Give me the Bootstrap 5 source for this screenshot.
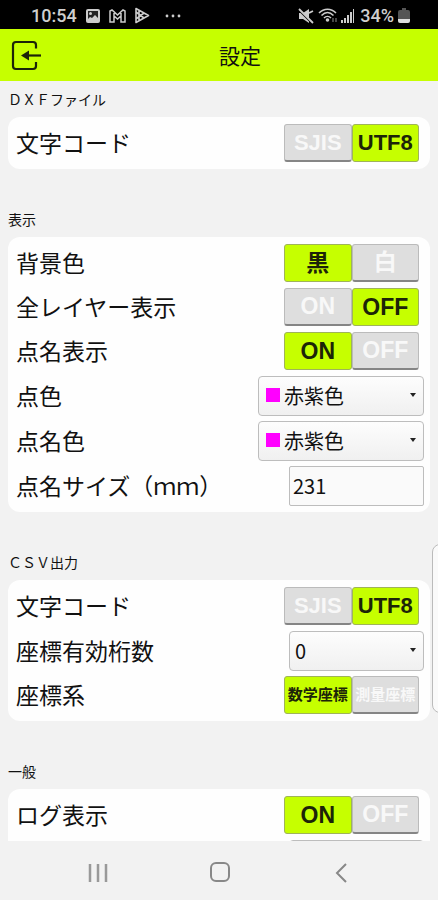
<!DOCTYPE html>
<html lang="ja">
<head>
<meta charset="utf-8">
<meta name="viewport" content="width=device-width, initial-scale=1">
<title>設定</title>
<link href="https://cdn.jsdelivr.net/npm/bootstrap@5.3.0/dist/css/bootstrap.min.css" rel="stylesheet">
<style>
:root { --lime: #c6ff00; }
body { background: #f2f2f2; color: #111; font-family: "Noto Sans CJK JP", sans-serif; }
.status-bar { height: 29px; background: #000; color: #cfcfcf; font: 500 18px/29px Roboto, sans-serif; padding: 2px 28px 0 31px; }
.app-bar { height: 52px; background: var(--lime); padding-left: 10px; }
.app-bar h1 { font-size: 21px; line-height: 52px; font-weight: 400; }
.back-btn { width: 32px; height: 34px; }
.settings { padding: 0 8px; min-height: 0; }
.settings h2 { font-size: 14px; line-height: 36px; height: 36px; font-weight: 400; color: #111; }
.panel { background: #fefefe; border-radius: 12px; padding: 4px 6px 4px 8px; margin-bottom: 32px; }
.setting { height: 44px; }
.setting-field { height: 45px; }
.setting-name { font-size: 23px; line-height: 40px; padding-bottom: 2px; }
.toggle { width: 135px; height: 38px; margin-right: 5px; }
.toggle .btn { width: 50%; padding: 0; border: 1px solid #bbb; border-bottom: 2px solid #858585; border-radius: 3px; font: 700 23px/35px "Liberation Sans", "Noto Sans CJK JP", sans-serif; background: #dedede; color: #f8f8f8; }
.toggle .btn.active { background: var(--lime); color: #1c2408; border: 1px solid #9fb35a; line-height: 36px; }
.toggle-code .btn { font-size: 22px; }
.toggle-small .btn { font-size: 15px; }
.field { height: 40px; border: 1px solid #bdbdbd; border-radius: 4px; font-size: 20px; line-height: 30px; color: #111; }
.field-input { width: 135px; padding: 0 3px; border-radius: 2px; background: #fafafa; }
.field-select { --arrow: url("data:image/svg+xml,%3Csvg xmlns='http://www.w3.org/2000/svg' width='8' height='5'%3E%3Cpath d='M1 0h6L4 4z' fill='%23222'/%3E%3C/svg%3E"); appearance: none; width: 135px; padding: 0 20px 0 5px; background: var(--arrow) no-repeat right 6px center, linear-gradient(#fdfdfd, #f0f0f0); }
.field-color { width: 166px; padding-left: 25px; background: var(--arrow) no-repeat right 6px center, linear-gradient(#f0f, #f0f) no-repeat 7px 11px / 14px 14px, linear-gradient(#fdfdfd, #f0f0f0); }
.edge-handle { right: -10px; top: 544px; width: 16px; height: 169px; border: 1px solid #bbb; border-radius: 8px; background: #fafafa; }
.nav-keys { height: 59px; padding: 0 36px 0 37px; background: #f2f2f2; }
</style>
<script src="https://cdn.jsdelivr.net/npm/bootstrap@5.3.0/dist/js/bootstrap.bundle.min.js"></script>
</head>
<body class="vh-100 d-flex flex-column overflow-hidden position-relative">
<div class="status-bar d-flex align-items-center flex-shrink-0">
  <span>10:54</span>
  <svg class="ms-2" width="16" height="16" viewBox="0 0 16 16"><rect x="1" y="1" width="14" height="14" rx="2" fill="#ccc"/><path d="M3 3h10v7l-3-3-3 3-2-1-2 2z" fill="#222"/><circle cx="5.500" cy="5.500" r="1.500" fill="#ccc"/></svg>
  <svg class="ms-2" width="17" height="16" viewBox="0 0 17 16" fill="none" stroke="#ccc" stroke-width="1.500"><path d="M1 3v11h4V8l3.500 3L12 8v6h4V3l-2-1-5.500 5L3 2zM5 3v5M12 3v5"/></svg>
  <svg class="ms-2" width="16" height="17" viewBox="0 0 16 17" fill="none" stroke="#ccc" stroke-width="1.600" stroke-linejoin="round"><path d="M2 1.500 14.500 8.500 2 15.500zM2 5l8 6M10 6l-8 6M5 3.500v10"/></svg>
  <svg class="ms-2" width="28" height="16" viewBox="0 0 28 16" fill="#ccc"><circle cx="9" cy="8" r="1.400"/><circle cx="15" cy="8" r="1.400"/><circle cx="21" cy="8" r="1.400"/></svg>
  <svg class="ms-auto" width="16" height="16" viewBox="0 0 16 16"><path d="M1 5h4l6-4v14l-6-4H1z" fill="#ccc"/><path d="m1 2 13 13" stroke="#000" stroke-width="2"/><path d="m1 1 14 14M11 5l4-2" stroke="#ccc" stroke-width="1.800"/></svg>
  <svg class="ms-1" width="22" height="16" viewBox="0 0 22 16" fill="none" stroke="#ccc" stroke-width="1.600"><path d="M1 5c5-5 12-5 17 0M3.500 7.500c4-4 8-4 12 0M6 10c2-2 5-2 7 0"/><circle cx="9.500" cy="12" r="1" fill="#ccc"/><path d="M15 10v4M18 10v4" stroke="#777" stroke-width="1.200"/></svg>
  <svg width="16" height="16" viewBox="0 0 16 16" fill="#ccc"><path d="M1 12h2v3H1zM4 10h2v5H4zM7 7h2v8H7zM10 4h2v11h-2z"/><path d="M13 1h1v14h-1z"/></svg>
  <span class="ms-1">34%</span>
  <svg class="ms-1" width="12" height="16" viewBox="0 0 12 16"><path d="M4 0h4v2h2q2 0 2 2v7H0V4q0-2 2-2h2z" fill="#555"/><path d="M0 11h12v2q0 2-2 2H2q-2 0-2-2z" fill="#ddd"/></svg>
</div>
<header class="app-bar d-flex align-items-center flex-shrink-0">
  <button type="button" class="back-btn btn p-0 border-0 d-flex align-items-center" aria-label="戻る"><svg width="32" height="32" viewBox="0 0 32 32" fill="none" stroke="#1c2408" stroke-width="2.200"><path d="M26 9.500V6q0-3-3-3H6Q3 3 3 6v21q0 3 3 3h17q3 0 3-3v-4"/><path d="M31 16.500H17"/><path d="m11 16.500 8-5v10z" fill="#1c2408" stroke="none"/></svg></button>
  <h1 class="flex-grow-1 text-center m-0">設定</h1>
</header>
<main class="settings flex-grow-1 overflow-hidden">
  <h2 class="m-0">ＤＸＦファイル</h2>
  <section class="panel">
    <div class="setting d-flex align-items-center justify-content-between"><span class="setting-name">文字コード</span>
      <div class="toggle toggle-code d-flex" role="group" aria-label="文字コード"><button type="button" class="btn">SJIS</button><button type="button" class="btn active">UTF8</button></div></div>
  </section>
  <h2 class="m-0">表示</h2>
  <section class="panel">
    <div class="setting d-flex align-items-center justify-content-between"><span class="setting-name">背景色</span>
      <div class="toggle d-flex" role="group" aria-label="背景色"><button type="button" class="btn active">黒</button><button type="button" class="btn">白</button></div></div>
    <div class="setting d-flex align-items-center justify-content-between"><span class="setting-name">全レイヤー表示</span>
      <div class="toggle d-flex" role="group" aria-label="全レイヤー表示"><button type="button" class="btn">ON</button><button type="button" class="btn active">OFF</button></div></div>
    <div class="setting d-flex align-items-center justify-content-between"><span class="setting-name">点名表示</span>
      <div class="toggle d-flex" role="group" aria-label="点名表示"><button type="button" class="btn active">ON</button><button type="button" class="btn">OFF</button></div></div>
    <div class="setting-field d-flex align-items-center justify-content-between"><label class="setting-name" for="pointColor">点色</label>
      <select id="pointColor" class="field field-select field-color"><option>赤紫色</option></select></div>
    <div class="setting-field d-flex align-items-center justify-content-between"><label class="setting-name" for="nameColor">点名色</label>
      <select id="nameColor" class="field field-select field-color"><option>赤紫色</option></select></div>
    <div class="setting-field d-flex align-items-center justify-content-between"><label class="setting-name text-nowrap" for="nameSize">点名サイズ（ｍｍ）</label>
      <input id="nameSize" class="field field-input" type="text" inputmode="numeric" value="231"></div>
  </section>
  <h2 class="m-0">ＣＳＶ出力</h2>
  <section class="panel">
    <div class="setting d-flex align-items-center justify-content-between"><span class="setting-name">文字コード</span>
      <div class="toggle toggle-code d-flex" role="group" aria-label="文字コード"><button type="button" class="btn">SJIS</button><button type="button" class="btn active">UTF8</button></div></div>
    <div class="setting-field d-flex align-items-center justify-content-between"><label class="setting-name" for="digits">座標有効桁数</label>
      <select id="digits" class="field field-select"><option>0</option></select></div>
    <div class="setting d-flex align-items-center justify-content-between"><span class="setting-name">座標系</span>
      <div class="toggle toggle-small d-flex" role="group" aria-label="座標系"><button type="button" class="btn active">数学座標</button><button type="button" class="btn">測量座標</button></div></div>
  </section>
  <h2 class="m-0">一般</h2>
  <section class="panel">
    <div class="setting d-flex align-items-center justify-content-between"><span class="setting-name">ログ表示</span>
      <div class="toggle d-flex" role="group" aria-label="ログ表示"><button type="button" class="btn active">ON</button><button type="button" class="btn">OFF</button></div></div>
    <div class="setting-field d-flex align-items-center justify-content-end">
      <select class="field field-select" aria-label="一般"><option></option></select></div>
  </section>
</main>
<div class="edge-handle position-absolute"></div>
<nav class="nav-keys d-flex align-items-center flex-shrink-0">
  <button type="button" class="btn border-0 p-0 col" aria-label="履歴"><svg width="20" height="20" viewBox="0 0 20 20" stroke="#999" stroke-width="2.500"><path d="M2 1v18M10 1v18M18 1v18"/></svg></button>
  <button type="button" class="btn border-0 p-0 col" aria-label="ホーム"><svg width="22" height="22" viewBox="0 0 22 22" fill="none" stroke="#888" stroke-width="2"><rect x="2" y="2" width="18" height="18" rx="5"/></svg></button>
  <button type="button" class="btn border-0 p-0 col" aria-label="戻る"><svg width="14" height="20" viewBox="0 0 14 20" fill="none" stroke="#888" stroke-width="2"><path d="m12 1-9 9 9 9"/></svg></button>
</nav>
</body>
</html>
